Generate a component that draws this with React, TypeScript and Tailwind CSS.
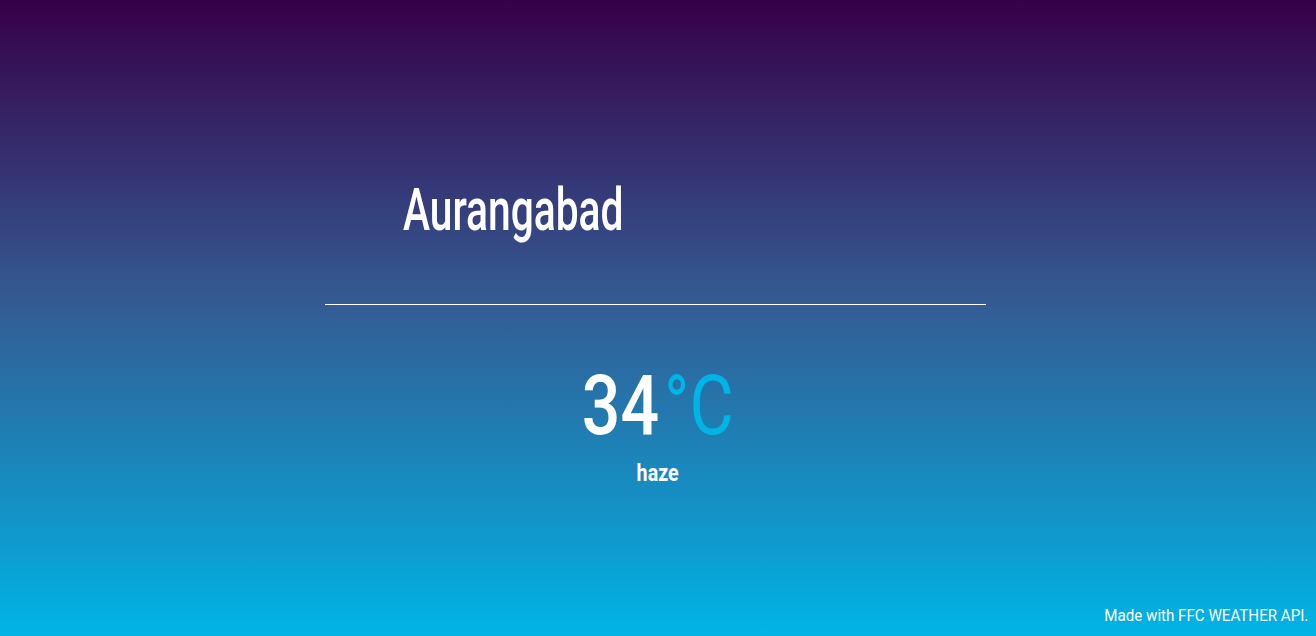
import React from 'react';

const font = { fontFamily: "Roboto, 'DejaVu Sans', sans-serif" };

export default function App() {
  const weather = { city: 'Aurangabad', temp: 34, desc: 'haze' };

  return (
    <div
      className="h-[636px] w-full flex flex-col bg-[linear-gradient(to_bottom,#360048_0%,#345a92_47%,#00b4e6_100%)] text-white"
      style={font}
    >
      <div className="w-[661px] ml-[325px] flex flex-col">
        <div className="h-[304px] pl-[78px] pt-[178px]">
          <h1 className="text-[59px] leading-[64px] font-medium origin-left scale-x-[0.69]">{weather.city}</h1>
        </div>
        <div className="h-px bg-white" />
      </div>

      <div className="flex flex-col items-center mt-[53px]">
        <div className="flex items-start text-[84px] leading-[96px] origin-center scale-x-[0.81]">
          <span className="font-medium">{weather.temp}</span>
          <span className="text-[#00b4e6] font-normal ml-[6px]">°C</span>
        </div>
        <p className="text-[24px] leading-7 font-bold mt-[5px] origin-center scale-x-[0.82]">{weather.desc}</p>
      </div>

      <footer className="mt-auto self-end pr-2 pb-[10px] text-[16px] leading-5 origin-right scale-x-[0.945]">
        Made with FFC WEATHER API.
      </footer>
    </div>
  );
}
